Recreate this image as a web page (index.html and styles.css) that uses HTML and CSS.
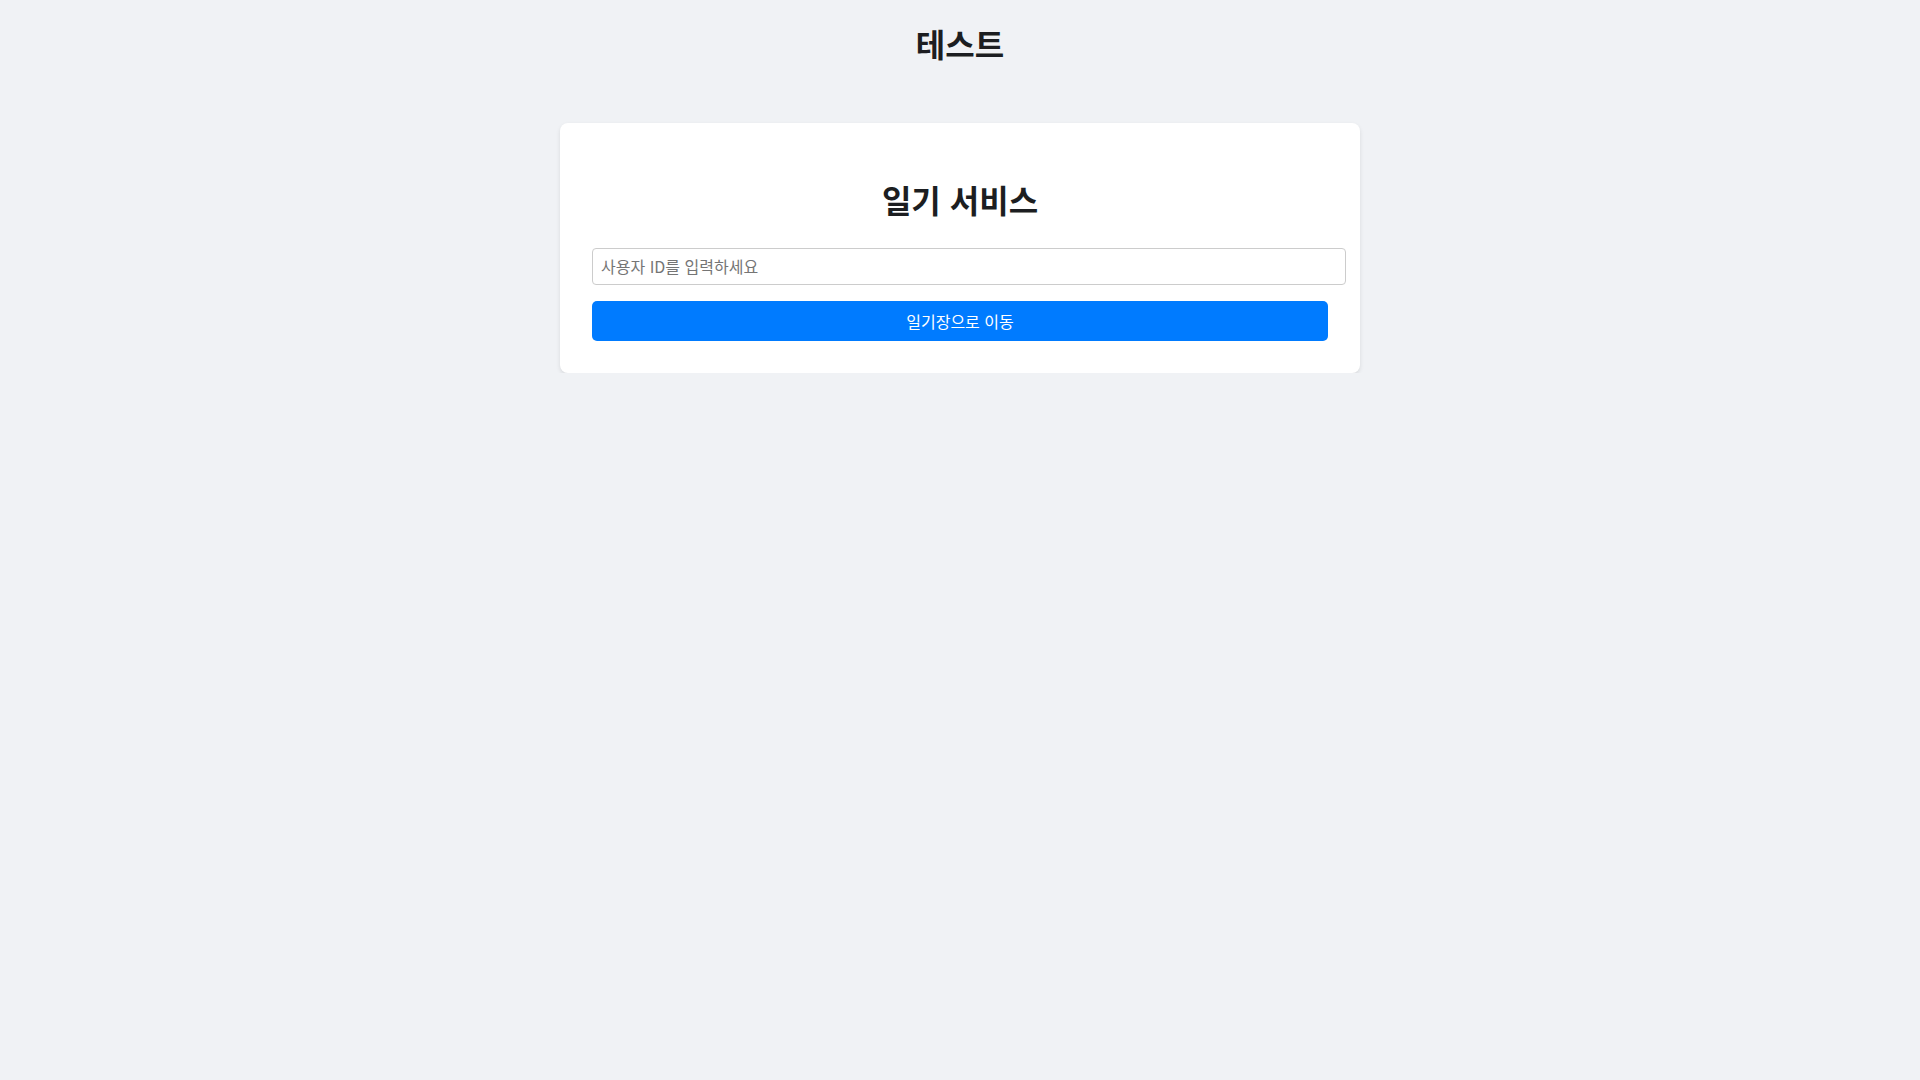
FILE: index.html
```html
<!DOCTYPE html>
<html lang="ko">
<head>
    <meta charset="UTF-8">
    <meta name="viewport" content="width=device-width, initial-scale=1.0">
    <title>일기 서비스</title>
    <link rel="stylesheet" href="styles.css">
</head>
<body>
    <header class="site-header">
        <h1>테스트</h1>
    </header>
    <main class="container">
        <div class="card">
            <h1>일기 서비스</h1>
            <form class="user-form">
                <input type="text" id="user_id" name="user_id" placeholder="사용자 ID를 입력하세요">
                <button type="submit">일기장으로 이동</button>
            </form>
        </div>
    </main>
</body>
</html>
```

FILE: styles.css
```css
body {
    font-family: "Noto Sans CJK KR", "Noto Sans", sans-serif;
    background-color: #f0f2f5;
    color: #1c1e21;
    margin: 0;
}
.site-header {
    text-align: center;
    padding-top: 1px;
}
.site-header h1 {
    font-size: 32px;
    margin: 19px 0 0;
}
.container {
    display: flex;
    justify-content: center;
    padding: 0 20px;
    margin-top: 57px;
}
.card {
    background-color: #fff;
    width: 100%;
    max-width: 800px;
    padding: 32px;
    border-radius: 8px;
    box-shadow: 0 2px 4px rgba(0, 0, 0, 0.1);
    box-sizing: border-box;
    text-align: center;
}
.card h1 {
    font-size: 32px;
    margin: 21px 0 26px;
}
.user-form {
    text-align: left;
}
input[type="text"] {
    display: block;
    width: 100%;
    padding: 8px;
    font-size: 16px;
    font-family: inherit;
    line-height: 19px;
    border: 1px solid #ccc;
    border-radius: 4px;
}
input::placeholder {
    color: #757575;
}
button {
    display: block;
    width: 100%;
    margin-top: 16px;
    padding: 10px;
    font-size: 16px;
    font-family: inherit;
    line-height: 20px;
    background-color: #007bff;
    color: #fff;
    border: none;
    border-radius: 5px;
    cursor: pointer;
}
button:hover {
    background-color: #0056b3;
}
```
